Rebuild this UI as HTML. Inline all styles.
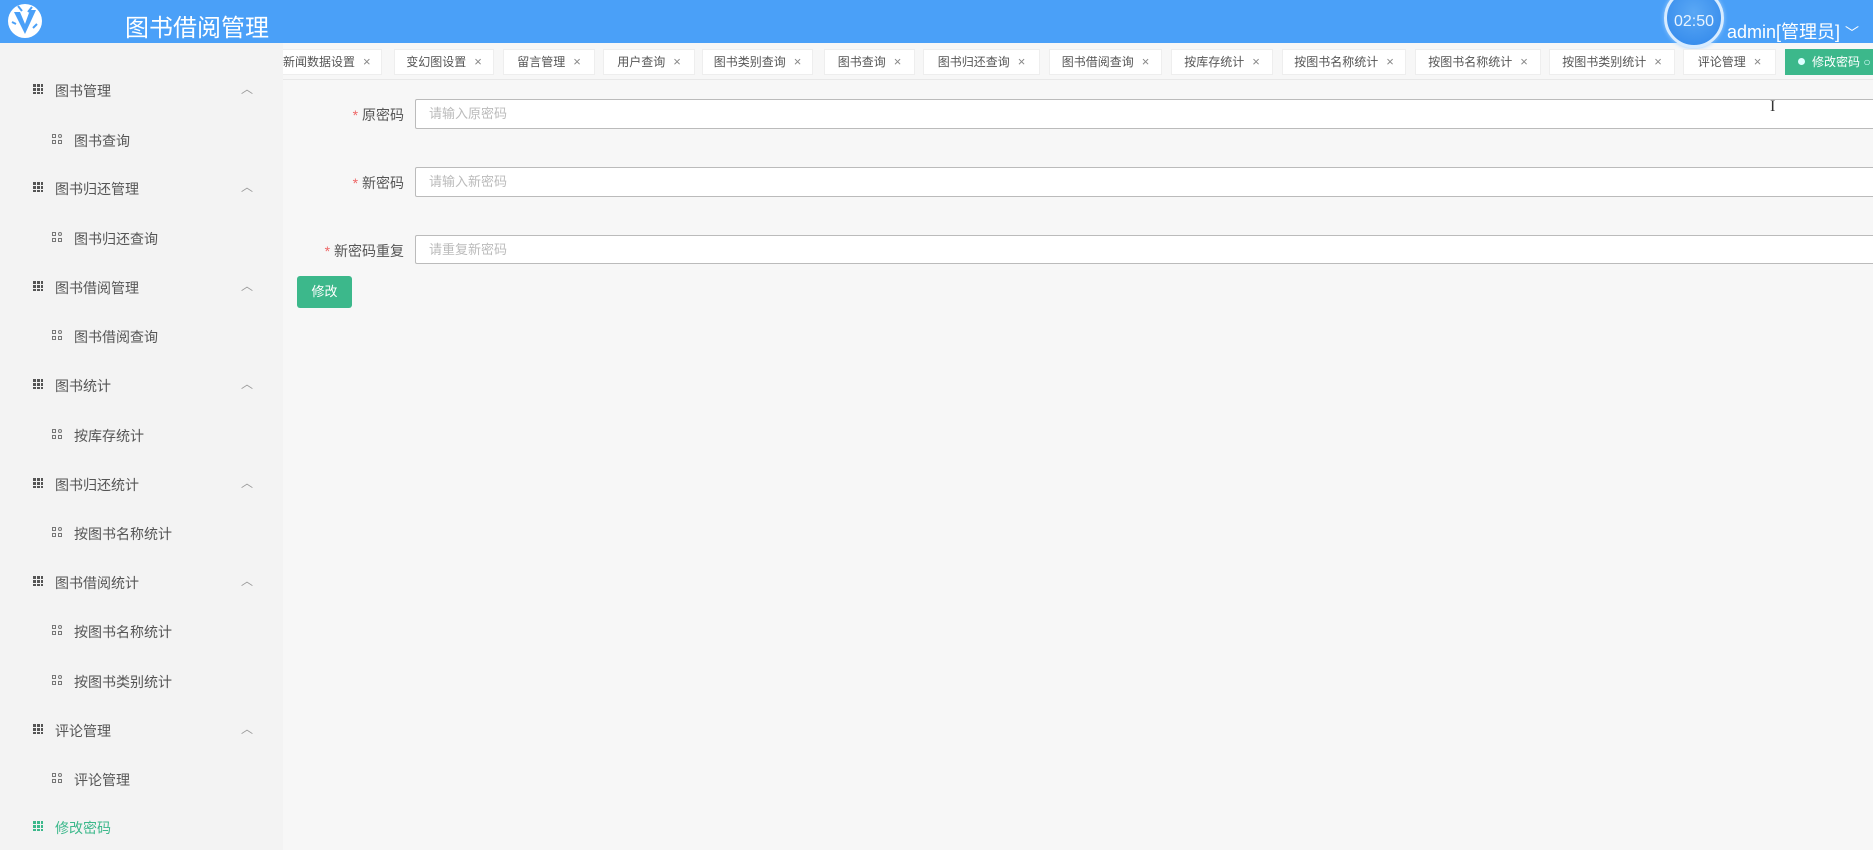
<!DOCTYPE html>
<html><head><meta charset="utf-8"><style>
*{margin:0;padding:0;box-sizing:border-box}
body{width:1873px;height:850px;overflow:hidden;background:#f7f7f7;font-family:"Liberation Sans","Noto Sans CJK SC",sans-serif;position:relative}
.hd{position:absolute;left:0;top:0;width:1873px;height:43px;background:#4aa0f8}
.title{position:absolute;left:125px;top:8px;color:#fff;font-size:24px}
.clock{position:absolute;left:1664px;top:-12px;width:60px;height:60px;border-radius:50%;background:radial-gradient(circle at 50% 40%,#5aa8f5,#2f86ea);border:3px solid #d8ecff;box-shadow:0 0 4px #9cf;color:#e8f4ff;font-size:16px;text-align:center;line-height:62px}
.admin{position:absolute;left:1727px;top:18px;color:#fff;font-size:18px}
.side{position:absolute;left:0;top:43px;width:283px;height:807px;background:#f3f3f3}
.it{position:absolute;font-size:14px;color:#555}
.g{left:55px}.s{left:74px}
.gi{position:absolute;left:33px;width:10px;height:10px;background:
linear-gradient(#f3f3f3,#f3f3f3) 3px 0/1px 10px no-repeat,linear-gradient(#f3f3f3,#f3f3f3) 7px 0/1px 10px no-repeat,linear-gradient(#f3f3f3,#f3f3f3) 0 3px/10px 1px no-repeat,linear-gradient(#f3f3f3,#f3f3f3) 0 7px/10px 1px no-repeat,#555}
.si{position:absolute;left:52px;width:11px;height:11px}
.si i{position:absolute;width:4px;height:4px;border:1px solid #777}
.car{position:absolute;left:241px;font-size:12px;color:#999}
.tab{position:absolute;top:49px;height:26px;background:#fff;border:1px solid #eee;font-size:12px;color:#555;line-height:24px;text-align:center}
.tab b{font-weight:normal;color:#888;margin-left:8px;font-size:13px}
.lbl{position:absolute;font-size:14px;color:#555;text-align:right;width:130px;left:274px}
.lbl span{color:#e66}
.inp{position:absolute;left:415px;width:1460px;background:#fff;border:1px solid #bbb;border-radius:2px;font-size:13px;color:#bbb;padding-left:13px}
.btn{position:absolute;left:297px;top:276px;width:55px;height:32px;background:#3cb88b;border-radius:3px;color:#fff;font-size:13px;text-align:center;line-height:32px}
</style></head><body>
<div class="hd">
<svg style="position:absolute;left:6px;top:2px" width="38" height="38" viewBox="0 0 38 38"><circle cx="19" cy="19" r="17" fill="#fff"/><path d="M8 10 L19 32 L30 8 L24 8 L19 22 L14 10Z" fill="#4aa0f8"/><path d="M12 4 L16 9 M26 5 L22 10 M6 20 L10 22 M31 22 L27 26" stroke="#4aa0f8" stroke-width="2"/></svg>
<div class="title">图书借阅管理</div>
<div class="clock">02:50</div>
<div class="admin">admin[管理员] <span style="font-size:14px">﹀</span></div>
</div>
<div class="side">
</div>
<div class="gi" style="top:84px"></div><div class="it g" style="top:81px">图书管理</div><div class="car" style="top:80px">︿</div>
<div class="si" style="top:134px"><i style="left:0;top:0"></i><i style="left:6px;top:0;border-radius:50%"></i><i style="left:0;top:6px"></i><i style="left:6px;top:6px"></i></div><div class="it s" style="top:131px">图书查询</div>
<div class="gi" style="top:182px"></div><div class="it g" style="top:179px">图书归还管理</div><div class="car" style="top:178px">︿</div>
<div class="si" style="top:232px"><i style="left:0;top:0"></i><i style="left:6px;top:0;border-radius:50%"></i><i style="left:0;top:6px"></i><i style="left:6px;top:6px"></i></div><div class="it s" style="top:229px">图书归还查询</div>
<div class="gi" style="top:281px"></div><div class="it g" style="top:278px">图书借阅管理</div><div class="car" style="top:277px">︿</div>
<div class="si" style="top:330px"><i style="left:0;top:0"></i><i style="left:6px;top:0;border-radius:50%"></i><i style="left:0;top:6px"></i><i style="left:6px;top:6px"></i></div><div class="it s" style="top:327px">图书借阅查询</div>
<div class="gi" style="top:379px"></div><div class="it g" style="top:376px">图书统计</div><div class="car" style="top:375px">︿</div>
<div class="si" style="top:429px"><i style="left:0;top:0"></i><i style="left:6px;top:0;border-radius:50%"></i><i style="left:0;top:6px"></i><i style="left:6px;top:6px"></i></div><div class="it s" style="top:426px">按库存统计</div>
<div class="gi" style="top:478px"></div><div class="it g" style="top:475px">图书归还统计</div><div class="car" style="top:474px">︿</div>
<div class="si" style="top:527px"><i style="left:0;top:0"></i><i style="left:6px;top:0;border-radius:50%"></i><i style="left:0;top:6px"></i><i style="left:6px;top:6px"></i></div><div class="it s" style="top:524px">按图书名称统计</div>
<div class="gi" style="top:576px"></div><div class="it g" style="top:573px">图书借阅统计</div><div class="car" style="top:572px">︿</div>
<div class="si" style="top:625px"><i style="left:0;top:0"></i><i style="left:6px;top:0;border-radius:50%"></i><i style="left:0;top:6px"></i><i style="left:6px;top:6px"></i></div><div class="it s" style="top:622px">按图书名称统计</div>
<div class="si" style="top:675px"><i style="left:0;top:0"></i><i style="left:6px;top:0;border-radius:50%"></i><i style="left:0;top:6px"></i><i style="left:6px;top:6px"></i></div><div class="it s" style="top:672px">按图书类别统计</div>
<div class="gi" style="top:724px"></div><div class="it g" style="top:721px">评论管理</div><div class="car" style="top:720px">︿</div>
<div class="si" style="top:773px"><i style="left:0;top:0"></i><i style="left:6px;top:0;border-radius:50%"></i><i style="left:0;top:6px"></i><i style="left:6px;top:6px"></i></div><div class="it s" style="top:770px">评论管理</div>
<div class="gi" style="top:821px;background-color:#3cb88b"></div><div class="it g" style="top:818px;color:#3cb88b">修改密码</div>

<div style="position:absolute;left:283px;top:79px;width:1590px;height:1px;background:#e8e8e8"></div>
<div class="tab" style="left:283px;width:99px;border-left:none;text-align:left">新闻数据设置<b>×</b></div>
<div class="tab" style="left:394px;width:100px">变幻图设置<b>×</b></div>
<div class="tab" style="left:503px;width:92px">留言管理<b>×</b></div>
<div class="tab" style="left:603px;width:92px">用户查询<b>×</b></div>
<div class="tab" style="left:702px;width:111px">图书类别查询<b>×</b></div>
<div class="tab" style="left:824px;width:91px">图书查询<b>×</b></div>
<div class="tab" style="left:923px;width:117px">图书归还查询<b>×</b></div>
<div class="tab" style="left:1049px;width:113px">图书借阅查询<b>×</b></div>
<div class="tab" style="left:1171px;width:102px">按库存统计<b>×</b></div>
<div class="tab" style="left:1282px;width:124px">按图书名称统计<b>×</b></div>
<div class="tab" style="left:1415px;width:126px">按图书名称统计<b>×</b></div>
<div class="tab" style="left:1549px;width:126px">按图书类别统计<b>×</b></div>
<div class="tab" style="left:1683px;width:93px">评论管理<b>×</b></div>
<div class="tab" style="left:1785px;width:100px;background:#3cb88b;border-color:#3cb88b;color:#fff;text-align:left;padding-left:12px"><span style="display:inline-block;width:7px;height:7px;border-radius:50%;background:#dff;margin-right:7px;vertical-align:1px"></span>修改密码 <span style="color:#dff">○</span></div>

<div class="lbl" style="top:105px"><span>* </span>原密码</div>
<div class="inp" style="top:99px;height:30px;line-height:28px">请输入原密码</div>
<div class="lbl" style="top:173px"><span>* </span>新密码</div>
<div class="inp" style="top:167px;height:30px;line-height:28px">请输入新密码</div>
<div class="lbl" style="top:241px"><span>* </span>新密码重复</div>
<div class="inp" style="top:235px;height:29px;line-height:27px">请重复新密码</div>
<div class="btn">修改</div>
<div style="position:absolute;left:1770px;top:98px;font-size:16px;color:#333;font-family:'Liberation Serif',serif">I</div>
</body></html>
